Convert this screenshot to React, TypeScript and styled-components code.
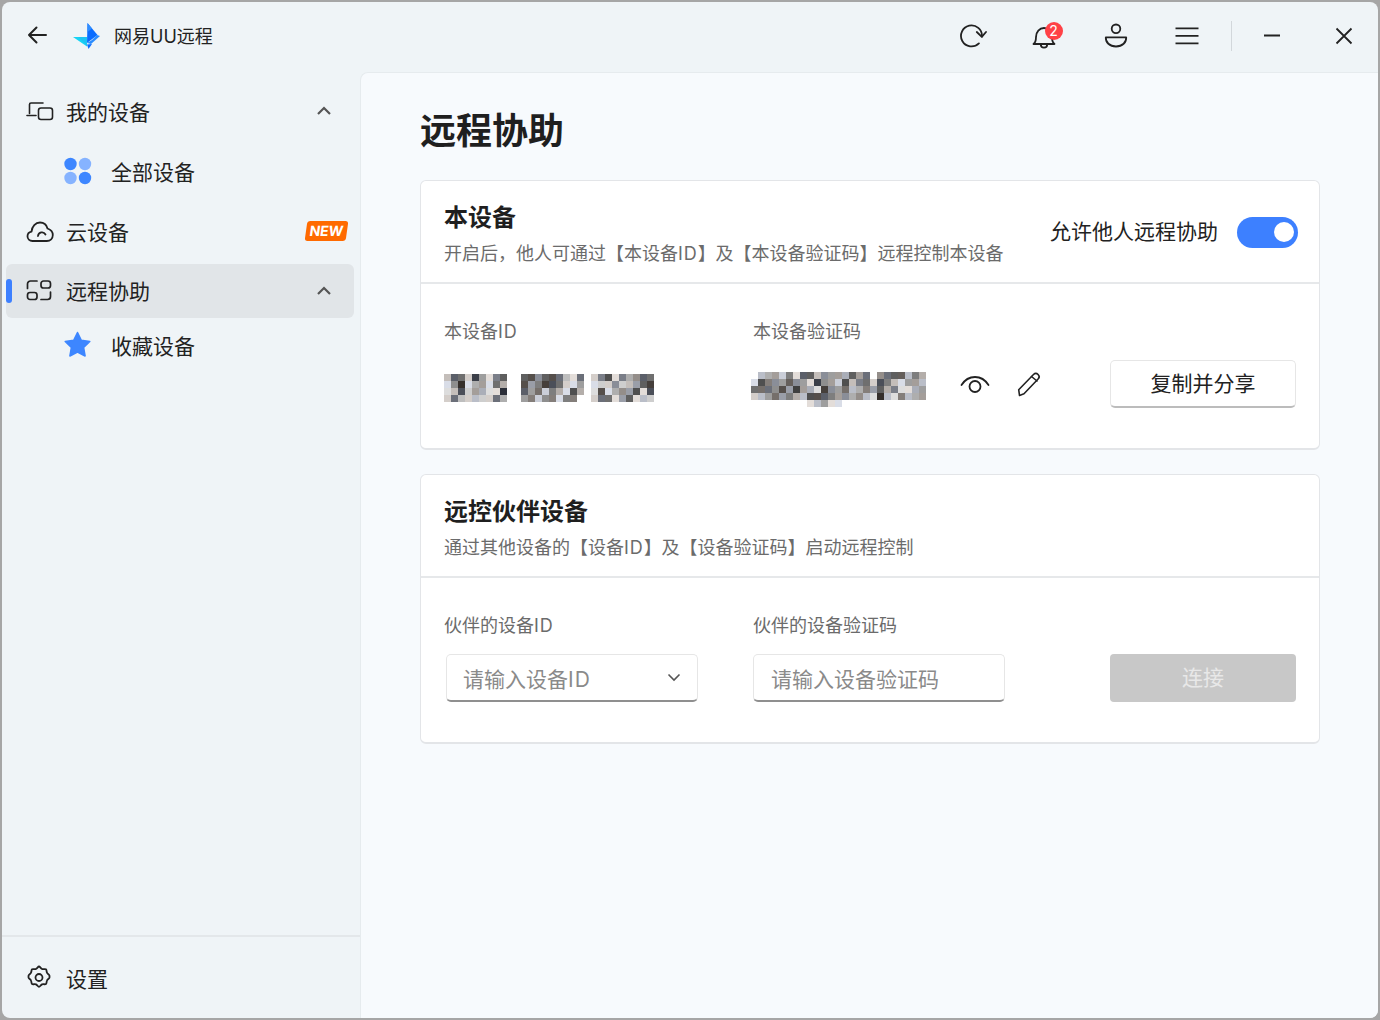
import React from "react";
import styled, { createGlobalStyle } from "styled-components";

const Global = createGlobalStyle`
  html, body { margin: 0; padding: 0; background: #a6a6a6; }
  body { font-family: Inter, "Noto Sans CJK SC", sans-serif; color: #222; }
  * { box-sizing: border-box; }
`;

const Page = styled.div`
  width: 1380px;
  height: 1020px;
  padding: 2px;
  overflow: hidden;
`;
const Win = styled.div`
  width: 100%;
  height: 100%;
  border-radius: 8px;
  background: #eff4f7;
  overflow: hidden;
  display: flex;
  flex-direction: column;
`;
const TitleBar = styled.header`
  height: 70px;
  padding-bottom: 2px;
  flex: none;
  display: flex;
  align-items: center;
`;
const Back = styled.div`
  width: 71px;
  padding-left: 24px;
  margin-top: -2px;
  display: flex;
`;
const Logo = styled.svg`
  width: 28px;
  height: 28px;
  margin-top: 2px;
  flex: none;
`;
const AppName = styled.div`
  margin: 2px 0 0 13px;
  font-size: 18px;
  line-height: 24px;
  flex: 1;
`;
const TopBtn = styled.div<{ $w: number }>`
  position: relative;
  width: ${(p) => p.$w}px;
  height: 40px;
  display: flex;
  align-items: center;
  justify-content: center;
  flex: none;
`;
const Badge = styled.span`
  position: absolute;
  left: 36px;
  top: 6px;
  width: 18px;
  height: 18px;
  border-radius: 50%;
  background: #ff4146;
  color: #fff;
  font-size: 14px;
  line-height: 18px;
  text-align: center;
`;
const VLine = styled.div`
  width: 1px;
  height: 30px;
  margin: 0 4px 0 8px;
  background: #d2d7db;
  flex: none;
`;
const CloseBtn = styled(TopBtn)`
  padding-left: 2px;
`;
const Body = styled.div`
  flex: 1;
  display: flex;
  min-height: 0;
`;
const Side = styled.aside`
  width: 358px;
  flex: none;
  display: flex;
  flex-direction: column;
`;
const Nav = styled.nav`
  flex: 1;
  padding: 9px 6px 0 4px;
  display: flex;
  flex-direction: column;
`;
const Row = styled.div<{ $active?: boolean; $h?: number; $mt?: number }>`
  position: relative;
  height: ${(p) => p.$h ?? 60}px;
  margin-top: ${(p) => p.$mt ?? 0}px;
  display: flex;
  align-items: center;
  padding-left: 20px;
  border-radius: 6px;
  background: ${(p) => (p.$active ? "#e1e5e8" : "transparent")};
  font-size: 21px;
`;
const RowIcon = styled.span<{ $top?: number }>`
  width: 40px;
  height: 28px;
  margin-top: ${(p) => p.$top ?? 0}px;
  flex: none;
  display: flex;
  align-items: center;
`;
const SubRow = styled(Row)`
  padding-left: 56px;
`;
const SubIcon = styled.span<{ $top?: number }>`
  width: 49px;
  margin-top: ${(p) => p.$top ?? 0}px;
  flex: none;
  display: flex;
  align-items: center;
`;
const Label = styled.span<{ $top?: number }>`
  flex: 1;
  line-height: 28px;
  margin-top: ${(p) => p.$top ?? 4}px;
`;
const Chevron = styled.span`
  width: 26px;
  margin-right: 17px;
  display: flex;
  justify-content: center;
`;
const Indicator = styled.span`
  position: absolute;
  left: 0;
  top: 15px;
  width: 6px;
  height: 24px;
  border-radius: 3px;
  background: #3d80ff;
`;
const NewTag = styled.span`
  width: 41px;
  height: 20px;
  margin-right: 7px;
  border-radius: 3px;
  background: #ff6a00;
  color: #fff;
  font: 700 14px/20px Inter, sans-serif;
  text-align: center;
  transform: skewX(-8deg);
`;
const SideFoot = styled.div`
  height: 83px;
  flex: none;
  border-top: 2px solid #e3e7ea;
  padding: 0 6px 0 4px;
  display: flex;
  align-items: center;
`;
const Main = styled.main`
  flex: 1;
  background: #f7fafd;
  border-left: 1px solid #e6ebee;
  border-top: 1px solid #e6ebee;
  border-top-left-radius: 8px;
  padding: 30px 59px 0 59px;
`;
const H1 = styled.h1`
  margin: 0 0 27px;
  height: 50px;
  font: 700 36px/50px "Noto Sans CJK SC", sans-serif;
  color: #1f1f1f;
`;
const Card = styled.section`
  height: 270px;
  margin-bottom: 24px;
  background: #fff;
  border: 1px solid #e3e5e8;
  border-bottom-width: 2px;
  border-radius: 6px;
`;
const CardHead = styled.div`
  height: 103px;
  padding: 18px 21px 0 23px;
  border-bottom: 2px solid #e6e8ea;
  display: flex;
  justify-content: space-between;
`;
const HeadText = styled.div`
  display: flex;
  flex-direction: column;
`;
const CardTitle = styled.h2`
  margin: 0;
  font: 700 24px/34px "Noto Sans CJK SC", sans-serif;
  color: #1f1f1f;
`;
const CardSub = styled.p`
  margin: 8px 0 0;
  font-size: 18px;
  line-height: 26px;
  color: #6b6b6b;
`;
const Latin = styled.span`
  letter-spacing: 0.05em;
`;
const Allow = styled.div`
  display: flex;
  align-items: center;
  gap: 19px;
  height: 62px;
  font-size: 21px;
`;
const Toggle = styled.div`
  position: relative;
  width: 61px;
  height: 31px;
  margin-top: 4px;
  border-radius: 16px;
  background: #3d80ff;
`;
const Knob = styled.span`
  position: absolute;
  right: 4px;
  top: 5.5px;
  width: 20px;
  height: 20px;
  border-radius: 50%;
  background: #fff;
`;
const CardBody = styled.div`
  display: grid;
  grid-template-columns: 309px 357px 186px;
  padding: 35px 23px 0;
  row-gap: 15px;
  align-items: center;
`;
const FieldLabel = styled.div`
  font-size: 18px;
  line-height: 26px;
  color: #6b6b6b;
`;
const Spacer = styled.div``;
const SecretRow = styled.div`
  display: flex;
  align-items: center;
`;
const IconSlot = styled.span`
  display: flex;
  width: 54px;
  justify-content: center;
`;
const ShareBtn = styled.div`
  height: 48px;
  background: #fff;
  border: 1px solid #e6e6e6;
  border-bottom: 2px solid #bcbcbc;
  border-radius: 5px;
  font-size: 21px;
  line-height: 46px;
  text-align: center;
  color: #222;
`;
const InputBox = styled.div<{ $w: number; $ml: number; $pl: number }>`
  width: ${(p) => p.$w}px;
  height: 48px;
  margin-left: ${(p) => p.$ml}px;
  padding: 0 16px 0 ${(p) => p.$pl}px;
  display: flex;
  align-items: center;
  justify-content: space-between;
  background: #fff;
  border: 1px solid #e6e6e6;
  border-bottom: 2px solid #8f8f8f;
  border-radius: 5px;
  font-size: 21px;
  color: #8a8a8a;
`;
const ConnectBtn = styled.div`
  height: 48px;
  border-radius: 4px;
  background: #c8c8c8;
  color: #e8e8e8;
  font-size: 21px;
  line-height: 48px;
  text-align: center;
`;
const MosaicSvg = styled.svg`
  display: block;
  flex: none;
`;
const IdMosaic = styled(MosaicSvg)`
  margin-top: 8px;
`;
const CodeMosaic = styled(MosaicSvg)`
  margin: 11px 22px 0 -2px;
`;

const Mosaic = ({ rows, as: C }: { rows: string[]; as: typeof MosaicSvg }) => {
  const w = rows[0].length * 7;
  const h = rows.length * 7;
  return (
    <C width={w} height={h} viewBox={`0 0 ${w} ${h}`} shapeRendering="crispEdges">
      {rows.map((r, y) =>
        r.split("").map((c, x) => {
          if (c === "f") return null;
          const v = Math.round(parseInt(c, 16) * 17 * 0.93);
          const tint = (x + y) % 3;
          const fill = `rgb(${v + (tint === 0 ? 6 : tint === 1 ? -4 : 0)},${v},${v + (tint === 1 ? 10 : tint === 0 ? -4 : 0)})`;
          return <rect key={`${x}-${y}`} x={x * 7} y={y * 7} width={7} height={7} fill={fill} />;
        })
      )}
    </C>
  );
};

const ID_ROWS = [
  "c67d4ae86ff659657ce7fd85e8b967",
  "e93eba e7b".replace(" ", "") + "ff5a8457dea" + "fedd9dca64",
  "ec5dabee3ff6a7d8be5bfe5eb9a5e5",
  "d7cdcdd7bffa8d98e88ffd77ea6ecd",
];

const CODE_ROWS = [
  "fcbad8e66c9aab6a7f9766c8b",
  "e589a69ae49ad5c87d58ceaac",
  "77795a4abe49a7cb8a6b8eeba",
  "dca7a8bc5568a9b9ce3ce8cba",
  "ffffffffecaeeffffffffffff",
];

const S = { fill: "none", stroke: "#222", strokeWidth: 1.8, strokeLinecap: "round" as const, strokeLinejoin: "round" as const };

const App = () => (
  <>
    <Global />
    <Page>
      <Win>
        <TitleBar>
          <Back>
            <svg width="22" height="22" viewBox="0 0 22 22" {...S} strokeWidth={2}>
              <path d="M3 11h17M10.500 3.500 3 11l7.500 7.500" />
            </svg>
          </Back>
          <Logo viewBox="0 0 28 28">
            <path d="M0 13h14v9.500z" transform="translate(0 1)" fill="#16d3f4" />
            <path d="M5.500 14H14v9z" fill="#1cc3f3" />
            <path d="M14.500 0 24.500 12 14 20z" fill="#0a6cff" />
            <path d="M14.500 0 19 5.500 14.500 9z" fill="#2f8dff" />
            <path d="M14 20l5-3 5-5 3 1-9 8z" fill="#2a8cff" />
            <path d="M14 21.500l5-.5-3.500 5z" fill="#0a6cff" />
          </Logo>
          <AppName>网易UU远程</AppName>
          <TopBtn $w={71.5}>
            <svg width="28" height="28" viewBox="0 0 28 28" {...S}>
              <path d="M19.900 21.400A10.500 10.500 0 1 1 23 14.500" />
              <path d="M17.800 10 22.800 14.800 27 10" />
            </svg>
          </TopBtn>
          <TopBtn $w={71.5}>
            <svg width="28" height="28" viewBox="0 0 28 28" {...S}>
              <path d="M3.500 22c2-1.500 2.500-3.500 2.500-7 0-5 3.500-9 8-9s8 4 8 9c0 3.500.5 5.500 2.500 7z" />
              <path d="M10.800 22.500a3.200 3.200 0 0 0 6.400 0" />
            </svg>
            <Badge>2</Badge>
          </TopBtn>
          <TopBtn $w={71.5}>
            <svg width="28" height="28" viewBox="0 0 28 28" {...S}>
              <circle cx="14" cy="6.800" r="4.300" />
              <path d="M3.800 15.300h20.400c.3 5-3.700 9.200-10.200 9.200s-10.500-4.200-10.200-9.200z" />
            </svg>
          </TopBtn>
          <TopBtn $w={71.5}>
            <svg width="26" height="20" viewBox="0 0 26 20" {...S} strokeLinecap="butt">
              <path d="M1.500 2.300h23M1.500 9.800h23M1.500 17.300h23" />
            </svg>
          </TopBtn>
          <VLine />
          <TopBtn $w={72}>
            <svg width="18" height="4" viewBox="0 0 18 4" {...S} strokeLinecap="butt">
              <path d="M1 1.500h16" />
            </svg>
          </TopBtn>
          <CloseBtn $w={70}>
            <svg width="18" height="18" viewBox="0 0 18 18" {...S} strokeLinecap="butt">
              <path d="M1.500 1.500l15 15M16.500 1.500l-15 15" />
            </svg>
          </CloseBtn>
        </TitleBar>
        <Body>
          <Side>
            <Nav>
              <Row>
                <RowIcon $top={1}>
                  <svg width="28" height="24" viewBox="0 0 28 24" {...S} strokeWidth={1.6}>
                    <path d="M3.500 13.500v-9a1.500 1.500 0 0 1 1.500-1.500h12" />
                    <path d="M1 15.500h9" />
                    <rect x="12.500" y="8" width="14" height="11.500" rx="2.500" />
                  </svg>
                </RowIcon>
                <Label>我的设备</Label>
                <Chevron>
                  <svg width="16" height="10" viewBox="0 0 16 10" fill="none" stroke="#555" strokeWidth="2.200">
                    <path d="M2 8l6-6 6 6" />
                  </svg>
                </Chevron>
              </Row>
              <SubRow>
                <SubIcon>
                  <svg width="30" height="30" viewBox="0 0 30 30">
                    <circle cx="8.500" cy="8" r="6.200" fill="#3d86ff" />
                    <circle cx="23" cy="8" r="6.200" fill="#86b3ff" />
                    <circle cx="8.500" cy="22" r="6.200" fill="#86b3ff" />
                    <circle cx="23" cy="22" r="6.200" fill="#3d86ff" />
                  </svg>
                </SubIcon>
                <Label>全部设备</Label>
              </SubRow>
              <Row>
                <RowIcon $top={2}>
                  <svg width="28" height="24" viewBox="0 0 28 24" {...S}>
                    <path d="M6.500 21C3.500 21 1.500 18.800 1.500 16.300c0-2.500 1.700-4.300 4-4.700C6 6.500 9.500 2.500 14 2.500c3.700 0 6.600 2.500 7.500 6C24.500 9.500 26.800 12 26.800 15c0 3.500-2.500 6-6 6z" />
                    <path d="M12 16a4 4 0 0 1 7.500-1.500" />
                  </svg>
                </RowIcon>
                <Label>云设备</Label>
                <NewTag>NEW</NewTag>
              </Row>
              <Row $active $h={54} $mt={3}>
                <Indicator />
                <RowIcon>
                  <svg width="26" height="22" viewBox="0 0 26 22" {...S} strokeWidth={1.7}>
                    <path d="M1.500 8.500V4a3 3 0 0 1 3-3H11" />
                    <rect x="15" y="1" width="9.500" height="7" rx="2.500" />
                    <rect x="1.500" y="12.500" width="9.500" height="7" rx="2.500" />
                    <path d="M15 19.500h6.500a3 3 0 0 0 3-3V12" />
                  </svg>
                </RowIcon>
                <Label $top={2}>远程协助</Label>
                <Chevron>
                  <svg width="16" height="10" viewBox="0 0 16 10" fill="none" stroke="#555" strokeWidth="2.200">
                    <path d="M2 8l6-6 6 6" />
                  </svg>
                </Chevron>
              </Row>
              <SubRow $h={56}>
                <SubIcon $top={-3}>
                  <svg width="30" height="28" viewBox="0 0 30 28">
                    <path
                      d="M15.500 1.500l3.800 7.800 8.500 1.200-6.200 6 1.500 8.500-7.600-4-7.600 4 1.500-8.500-6.200-6 8.500-1.200z"
                      fill="#3d86ff"
                      stroke="#3d86ff"
                      strokeWidth="1.500"
                      strokeLinejoin="round"
                    />
                  </svg>
                </SubIcon>
                <Label $top={2}>收藏设备</Label>
              </SubRow>
            </Nav>
            <SideFoot>
              <Row>
                <RowIcon $top={-2}>
                  <svg width="26" height="26" viewBox="0 0 26 26" {...S}>
                    <path d="M13 2.500c1 0 1.700 1.800 3 2.400 1.300.5 3.200-.2 3.900.3.800.6.500 2.500 1.200 3.700.6 1.200 2.400 1.800 2.400 2.900 0 .5 0 1.200 0 1.700 0 1.100-1.800 1.700-2.400 2.900-.7 1.200-.4 3.100-1.200 3.700-.7.500-2.600-.2-3.900.3-1.300.6-2 2.400-3 2.400s-1.700-1.800-3-2.400c-1.300-.5-3.200.2-3.900-.3-.8-.6-.5-2.500-1.200-3.700-.6-1.200-2.400-1.800-2.400-2.900 0-.5 0-1.200 0-1.700 0-1.100 1.800-1.700 2.400-2.900.7-1.200.4-3.100 1.200-3.700.7-.5 2.600.2 3.900-.3 1.300-.6 2-2.400 3-2.400z" />
                    <circle cx="13" cy="13.500" r="3.500" />
                  </svg>
                </RowIcon>
                <Label>设置</Label>
              </Row>
            </SideFoot>
          </Side>
          <Main>
            <H1>远程协助</H1>
            <Card>
              <CardHead>
                <HeadText>
                  <CardTitle>本设备</CardTitle>
                  <CardSub>
                    开启后，他人可通过【本设备<Latin>ID</Latin>】及【本设备验证码】远程控制本设备
                  </CardSub>
                </HeadText>
                <Allow>
                  允许他人远程协助
                  <Toggle>
                    <Knob />
                  </Toggle>
                </Allow>
              </CardHead>
              <CardBody>
                <FieldLabel>
                  本设备<Latin>ID</Latin>
                </FieldLabel>
                <FieldLabel>本设备验证码</FieldLabel>
                <Spacer />
                <Mosaic rows={ID_ROWS} as={IdMosaic} />
                <SecretRow>
                  <Mosaic rows={CODE_ROWS} as={CodeMosaic} />
                  <IconSlot>
                    <svg width="32" height="24" viewBox="0 0 32 24" {...S}>
                      <path d="M2.500 13C6 7.500 10.500 5 16 5s10 2.500 13.500 8" />
                      <circle cx="16" cy="14.500" r="5.500" />
                    </svg>
                  </IconSlot>
                  <IconSlot>
                    <svg width="26" height="26" viewBox="0 0 26 26" {...S} strokeWidth={1.6}>
                      <path d="M3.500 24.500 2.700 18.700 17.500 3.500c1.400-1.400 3.300-1.300 4.600 0 1.300 1.300 1.300 3.200 0 4.500L8 22.800z" />
                      <path d="M15.500 5.500l5.500 4.500" />
                    </svg>
                  </IconSlot>
                </SecretRow>
                <ShareBtn>复制并分享</ShareBtn>
              </CardBody>
            </Card>
            <Card>
              <CardHead>
                <HeadText>
                  <CardTitle>远控伙伴设备</CardTitle>
                  <CardSub>
                    通过其他设备的【设备<Latin>ID</Latin>】及【设备验证码】启动远程控制
                  </CardSub>
                </HeadText>
              </CardHead>
              <CardBody>
                <FieldLabel>
                  伙伴的设备<Latin>ID</Latin>
                </FieldLabel>
                <FieldLabel>伙伴的设备验证码</FieldLabel>
                <Spacer />
                <InputBox $w={252} $ml={2} $pl={16}>
                  <span>
                    请输入设备<Latin>ID</Latin>
                  </span>
                  <svg width="14" height="9" viewBox="0 0 14 9" fill="none" stroke="#555" strokeWidth="1.600">
                    <path d="M1.500 1.500 7 7l5.500-5.500" />
                  </svg>
                </InputBox>
                <InputBox $w={252} $ml={0} $pl={17}>请输入设备验证码</InputBox>
                <ConnectBtn>连接</ConnectBtn>
              </CardBody>
            </Card>
          </Main>
        </Body>
      </Win>
    </Page>
  </>
);

export default App;
